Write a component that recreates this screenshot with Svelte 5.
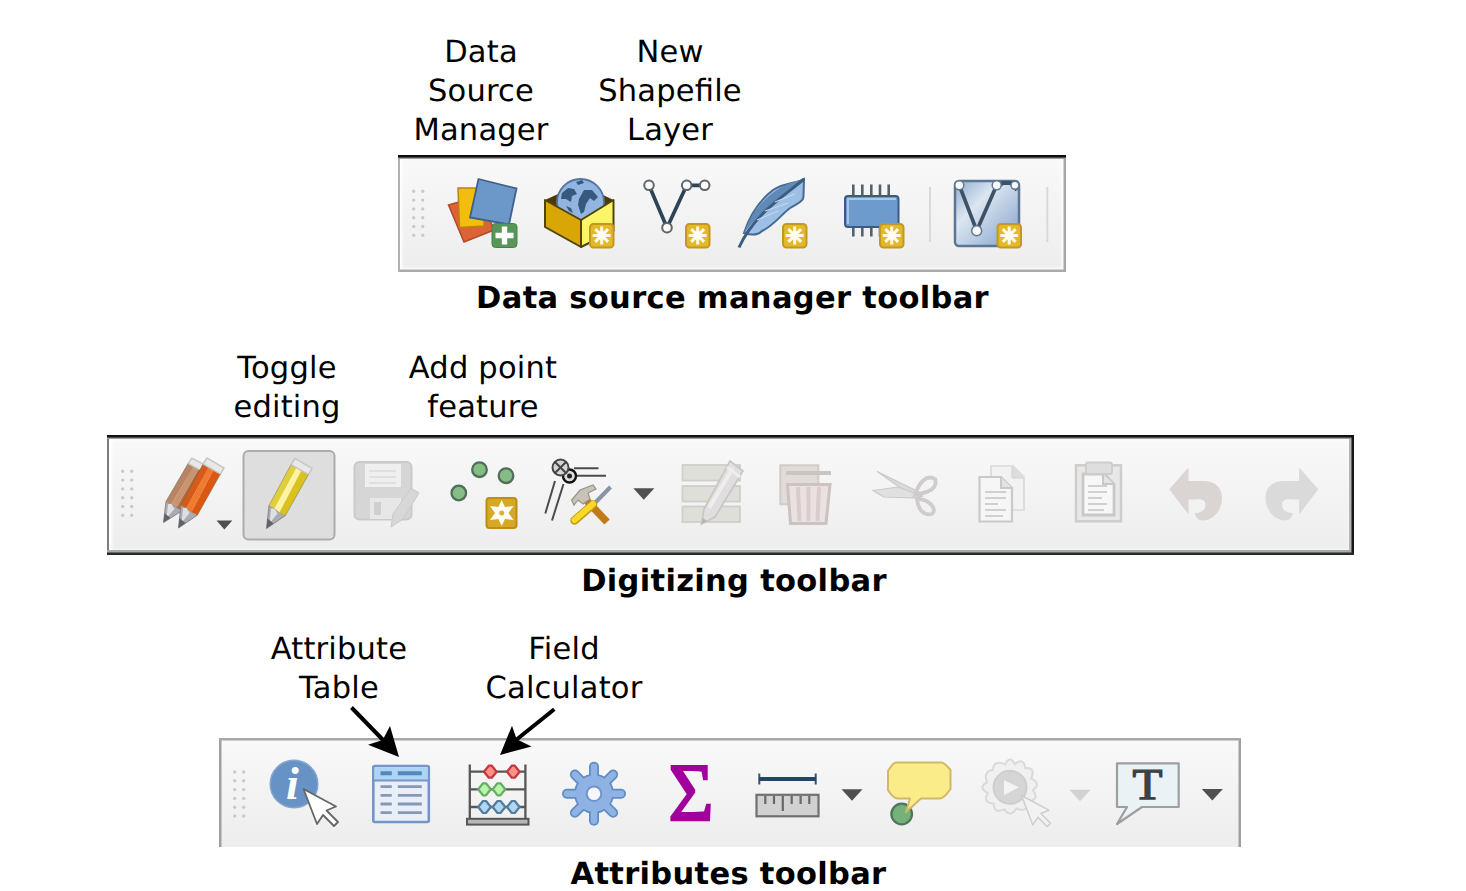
<script>
  const groups = [
    {
      id: 'source', caption: 'Data source manager toolbar', y: 155, height: 117,
      labels: [['Data', 'Source', 'Manager'], ['New', 'Shapefile', 'Layer']],
      stops: [398, 440, 530, 625, 725, 825, 920, 942, 1032, 1066],
      tools: ['grip', 'sources', 'package', 'shapefile', 'feather', 'memory', 'divider', 'virtual', 'divider2']
    },
    {
      id: 'digitizing', caption: 'Digitizing toolbar', y: 435, height: 120,
      labels: [['Toggle', 'editing'], ['Add point', 'feature']],
      stops: [107, 150, 240, 340, 432, 530, 670, 760, 860, 960, 1055, 1150, 1245, 1354],
      tools: ['grip', 'edits', 'toggle', 'save', 'points', 'vertex', 'modify', 'trash', 'cut', 'copy', 'paste', 'undo', 'redo']
    },
    {
      id: 'attributes', caption: 'Attributes toolbar', y: 738, height: 109,
      labels: [['Attribute', 'Table'], ['Field', 'Calculator']],
      stops: [219, 255, 350, 450, 545, 645, 735, 870, 965, 1100, 1241],
      tools: ['grip', 'identify', 'table', 'abacus', 'gear', 'sigma', 'measure', 'tip', 'action', 'text']
    }
  ];
  const six = [0, 1, 2, 3, 4, 5];
  const turns = [0, 45, 90, 135, 180, 225, 270, 315];
</script>

{#snippet star(x, y, s = 25)}
  <g transform="translate({x} {y}) scale({s / 25})">
    <rect x="1" y="1" width="23.5" height="23.5" rx="3.5" fill="#e3b92c" stroke="#c6971f" stroke-width="2" />
    <path d="M12.7 3.5V21.500M3.700 12.5H21.7M6.3 6.1L19.1 18.9M19.1 6.1L6.3 18.9" stroke="#fffbe6" stroke-width="3" />
    <circle cx="12.7" cy="12.5" r="4.2" fill="#fffdf2" />
  </g>
{/snippet}

{#snippet pencil(x, y, left, mid, right, squash = 1)}
  <g transform="translate({x} {y}) scale(1 {squash})">
    <path d="M2.5-23L19-13L0 0Z" fill="#a9abb2" stroke="#888" stroke-width="1" />
    <path d="M4.5-20L8-20L11-15L3-5Z" fill="#dedfe3" />
    <path d="M0 0L1-10L7-5Z" fill="#606268" />
    <path d="M2.5-23L24.5-64L30.5-61L8-20Z" fill={left} />
    <path d="M8-20L30-61L35-58L13-16Z" fill={mid} />
    <path d="M13-16L35-58L42-54L19-13Z" fill={right} />
    <path d="M24.5-64L28.5-70L45.5-60L42-54Z" fill="#e8e8e6" stroke="#c4c4c4" stroke-width="1.4" />
    <path d="M2.5-23L24.5-64M42-54L19-13" stroke="#655b48" stroke-opacity=".4" fill="none" />
  </g>
{/snippet}

{#snippet drop(x, y, fill = '#505050')}
  <path d="M{x - 10.5} {y}H{x + 10.5}L{x} {y + 11.5}Z" {fill} />
{/snippet}

{#snippet pointer(stroke, fill)}
  <path d="M0 0L32.5 17.5L23 21.5L34.5 33L30.5 37L19.5 26L13.5 35Z" {stroke} {fill} stroke-width="1.8" stroke-linejoin="round" />
{/snippet}

{#snippet icon(name, x, y)}
  {#if name === 'grip'}
    {#each six as r}
      <circle cx={x + 15.7} cy={y + (y > 700 ? 34 : 36.3) + r * 8.8} r="1.7" fill="#cacaca" />
      <circle cx={x + 24.7} cy={y + (y > 700 ? 34 : 36.3) + r * 8.8} r="1.7" fill="#cacaca" />
    {/each}
  {:else if name === 'sources'}
    <path d="M448.5 205L464 242L494 230L480 196Z" fill="#dc6335" stroke="#b04a28" stroke-width="1.5" />
    <path d="M458 188H484V226L459.5 227.5Z" fill="#f2bd0c" stroke="#b98213" stroke-width="1.5" />
    <path d="M478.5 179L516.5 188.5L509 224.5L470 217.5Z" fill="#6c98c9" stroke="#40608c" stroke-width="1.8" />
    <rect x="492" y="223.500" width="25" height="24" rx="3.5" fill="#579657" stroke="#448448" />
    <path d="M504.500 226.500V244.500M495.500 235.500H513.500" stroke="#fff" stroke-width="5.400" />
  {:else if name === 'package'}
    <path d="M545 200L580 184L613.500 200L581 219Z" fill="#4b3a08" />
    <circle cx="580.500" cy="202.500" r="23.500" fill="#91b4e0" stroke="#54759f" stroke-width="1.800" />
    <path d="M562 193L568 188L574 189L577 194L572 196L571 202L566 199L561 199ZM579 199L584 190L592 190L598 197L594 201L590 198L586 204L584 212L581 214L578 205ZM576 182L582 180L584 183L578 185ZM566 206L571 208L573 213L569 211Z" fill="#36597d" />
    <path d="M545 200L581 220V247L545 227Z" fill="#d8a606" stroke="#51430b" stroke-width="2" stroke-linejoin="round" />
    <path d="M581 220L613.500 200V231L581 247Z" fill="#fcf568" stroke="#51430b" stroke-width="2" stroke-linejoin="round" />
    {@render star(589, 223)}
  {:else if name === 'shapefile'}
    <path d="M649 185.300L667 227.700L686.700 185.300H704.700" fill="none" stroke="#2d4358" stroke-width="3.700" />
    <g fill="#fafafa" stroke="#5e6469" stroke-width="2">
      <circle cx="649" cy="185.300" r="4.800" /><circle cx="667" cy="227.700" r="4.800" />
      <circle cx="686.700" cy="185.300" r="4.800" /><circle cx="704.700" cy="185.300" r="4.800" />
    </g>
    {@render star(685, 223)}
  {:else if name === 'feather'}
    <path d="M804 179C795 184 785 182 773 190C760 200 750 214 744 233C750 235 757 236 762 231C773 226 781 215 790 208C797 204 804 201 803.500 196Z" fill="#9dbee5" stroke="#466b92" stroke-width="2" />
    <path d="M804 179C784 183 757 197 744 233C763 208 782 198 804 179Z" fill="#6089b6" />
    <path d="M804 179C783 197 754 214 739 247.500" fill="none" stroke="#3c5d80" stroke-width="3" />
    <path d="M757 220L778 211M765 211L788 203M775 202L795 194" stroke="#c5d8f0" stroke-width="1.200" />
    {@render star(782, 223)}
  {:else if name === 'memory'}
    <path d="M853.300 184.500V236.500M862.300 184.500V236.500M871.300 184.500V236.500M880 184.500V236.500M888.700 184.500V236.500" stroke="#53606e" stroke-width="2.600" />
    <rect x="845" y="196" width="53.500" height="31" rx="3" fill="#6e9bce" stroke="#3c5a82" stroke-width="2" />
    <path d="M848 224V199H896" fill="none" stroke="#a9c8ea" stroke-width="1.800" />
    {@render star(879, 223)}
  {:else if name === 'divider'}
    <path d="M930 187V242" stroke="#d9d9d9" stroke-width="2" />
  {:else if name === 'divider2'}
    <path d="M1047.300 187V242" stroke="#d9d9d9" stroke-width="2" />
  {:else if name === 'virtual'}
    <rect x="955" y="181" width="64" height="65" rx="4" fill="url(#glass)" stroke="#5b7595" stroke-width="2.500" />
    <path d="M959.300 185.300L976.700 230.700L996.700 185.300" fill="none" stroke="#3d5167" stroke-width="3.700" />
    <path d="M996.700 187L1003 183H1011L1017 190" fill="none" stroke="#3d5167" stroke-width="4" />
    <g fill="#f7f9fb" stroke="#64778c" stroke-width="1.500">
      <circle cx="959.300" cy="185.300" r="4.500" /><circle cx="976.700" cy="230.700" r="5" />
      <circle cx="996.700" cy="185.300" r="4.500" /><circle cx="1015" cy="185.300" r="4" />
    </g>
    {@render star(996.500, 223)}
  {:else if name === 'edits'}
    {@render pencil(163.500, 522.500, '#b98463', '#ca9470', '#ad6d49', 0.92)}
    {@render pencil(178.500, 528, '#d75b18', '#f07a30', '#dc5710')}
    <path d="M216.500 520.500H232.300L224.400 529.500Z" fill="#505050" />
  {:else if name === 'toggle'}
    <rect x="243.500" y="451" width="91" height="88.500" rx="5" fill="#dedede" stroke="#acacac" stroke-width="2" />
    {@render pencil(266.500, 528.500, '#e0cf3c', '#fdf3a0', '#d9c21d')}
  {:else if name === 'save'}
    <rect x="354.500" y="462" width="57" height="57.500" rx="5" fill="#d6d6d6" stroke="#cacaca" stroke-width="2" />
    <path d="M365 464H401V487H365Z" fill="#efefef" /><path d="M369 471H396M369 477H396M369 483H396" stroke="#dadada" stroke-width="1.500" />
    <rect x="370" y="498" width="31" height="21" fill="#e7e7e7" /><rect x="374" y="502" width="7" height="13" fill="#cfcfcf" />
    <path d="M411 488L419 493L403 519L391 527L393 514Z" fill="#d8d7d7" stroke="#cacaca" />
  {:else if name === 'points'}
    <g fill="#86bd86" stroke="#506e58" stroke-width="2.300">
      <circle cx="479.500" cy="469.700" r="7.300" /><circle cx="506" cy="475.700" r="7.300" /><circle cx="458.800" cy="493" r="7.300" />
    </g>
    <rect x="486.500" y="498" width="30" height="30" rx="3" fill="#d5a925" stroke="#bd8e17" stroke-width="2" />
    <path d="M501.700 500L505 507L513.500 506L508.500 513L513.500 520L505 519L501.700 526L498.400 519L490 520L495 513L490 506L498.400 507Z" fill="#fffef2" />
    <circle cx="501.700" cy="513" r="2.500" fill="#d3b33c" />
  {:else if name === 'vertex'}
    <path d="M574 468.300H598.500M577 475.700H606M555 481L545.300 513.500M563.500 484L552 520.500" stroke="#4c4c4c" stroke-width="2" />
    <circle cx="569.500" cy="476" r="6.500" fill="#ddd" stroke="#111" stroke-width="2.400" />
    <circle cx="560.500" cy="467.500" r="8" fill="#d5d5d5" stroke="#454545" stroke-width="2" />
    <path d="M555 462L566 473M566 462L555 473" stroke="#444" stroke-width="2" />
    <circle cx="569.500" cy="476" r="2.500" fill="#222" />
    <path d="M587 501L607 522" stroke="#c07b17" stroke-width="7.500" />
    <path d="M571.700 500L580 490L593 485L596 489L588 493L590 499L583 504L578 500L574 505Z" fill="#c9c3b7" stroke="#96938e" stroke-width="1.200" />
    <path d="M591 507L610.500 487" stroke="#8993a3" stroke-width="4" />
    <path d="M574.500 520.500L593 504.500" stroke="#c79718" stroke-width="8.500" stroke-linecap="round" />
    <path d="M574.500 520L593 504" stroke="#f7da28" stroke-width="6" stroke-linecap="round" />
    {@render drop(643.800, 488.300)}
  {:else if name === 'modify'}
    <g fill="#dfdfd9" stroke="#d0cec9" stroke-width="1.800">
      <rect x="682.500" y="465" width="57.500" height="15.500" /><rect x="682.500" y="486" width="57.500" height="15.500" /><rect x="682.500" y="506.500" width="57.500" height="15.500" />
    </g>
    <path d="M730 461L743 471L715 517L701.500 524L704 509Z" fill="#e0dede" stroke="#c9c6c5" stroke-width="1.700" />
    <path d="M709 508L733 468" stroke="#efeeee" stroke-width="4" /><path d="M727 467L740 477" stroke="#ededed" stroke-width="3" />
    <path d="M701.500 524L703 518L707 521Z" fill="#b8b5b4" />
  {:else if name === 'trash'}
    <rect x="780.300" y="465.300" width="38" height="39" fill="#e1dcd8" stroke="#d2cbc7" stroke-width="2" />
    <path d="M786 473H831" stroke="#cbc4c1" stroke-width="4" />
    <path d="M787.500 484.500H830L826 523.500H790.500Z" fill="#eae2e1" stroke="#cbc2c1" stroke-width="3" />
    <path d="M798 487L799.500 521M808.500 487V521M819 487L817.500 521" stroke="#d8cdcc" stroke-width="4" />
  {:else if name === 'cut'}
    <path d="M877 471.500L923 494L918 500Z" fill="#dadada" stroke="#cacaca" stroke-width="1.200" />
    <path d="M873 490.500L898 487L922 496L913 498L884 497Z" fill="#e0e0e0" stroke="#cacaca" stroke-width="1.200" />
    <path d="M915 495C919 482 927 474 935 479C938 489 929 492 915 495ZM917 499C929 499 938 509 932 514C923 516 918 509 917 499Z" fill="none" stroke="#d0cccc" stroke-width="3.800" />
  {:else if name === 'copy'}
    <path d="M991 466H1013L1024 477V510H991Z" fill="#f2f2f2" stroke="#dadada" stroke-width="1.700" /><path d="M1012 466V478H1024" fill="#ddd" stroke="#d2d2d2" />
    <path d="M979.500 477H1001L1012 488V521.500H979.500Z" fill="#f6f6f6" stroke="#c9c9c9" stroke-width="2.200" /><path d="M1001 477V488H1012" fill="#e3e3e3" stroke="#c9c9c9" stroke-width="2" />
    <path d="M985 492H1006M985 498H1006M985 504H998M985 510H1006M985 516H1003" stroke="#d0d0d0" stroke-width="1.800" />
  {:else if name === 'paste'}
    <rect x="1076" y="465.300" width="45" height="56" fill="#e9e8e6" stroke="#cfcdcb" stroke-width="2.500" />
    <path d="M1083 474H1104L1114 484V515H1083Z" fill="#f7f7f7" stroke="#c8c8c8" stroke-width="2.800" />
    <path d="M1103 474V484H1114" fill="#e3e3e3" stroke="#c8c8c8" stroke-width="2" />
    <rect x="1086" y="462.500" width="26" height="11.500" rx="2" fill="#dedede" stroke="#cdcdcd" stroke-width="1.800" />
    <path d="M1088 486H1107M1088 492H1107M1088 498H1102M1088 504H1107M1088 510H1104" stroke="#d0d0d0" stroke-width="1.800" />
  {:else if name === 'undo'}
    <path d="M1169.300 489.300L1188.500 467.500V481H1203C1216 481 1222 488 1222 498C1222 511 1213 520 1203 520.500C1198 520.500 1195 517 1195 513C1203 513 1207 508 1205 502C1203 498 1196 499.500 1188.500 499.500V514.500Z" fill="#dad5d3" />
  {:else if name === 'redo'}
    <path transform="translate(2487.600 0) scale(-1 1)" d="M1169.300 489.300L1188.500 467.500V481H1203C1216 481 1222 488 1222 498C1222 511 1213 520 1203 520.500C1198 520.500 1195 517 1195 513C1203 513 1207 508 1205 502C1203 498 1196 499.500 1188.500 499.500V514.500Z" fill="#dadada" />
  {:else if name === 'identify'}
    <circle cx="294" cy="784" r="23.800" fill="#6792c6" stroke="#83a5cf" stroke-width="1.500" />
    <text x="286" y="799" class="glyph info">i</text>
    <g transform="translate(303.500 789)">{@render pointer('#666', '#fff')}</g>
  {:else if name === 'table'}
    <rect x="373.300" y="766" width="55.500" height="56" rx="1.500" fill="#e9eff8" stroke="#7595c9" stroke-width="2.600" />
    <path d="M374.500 767.500H427.500V780H374.500Z" fill="#add4f6" /><path d="M374 780.500H428" stroke="#7595c9" stroke-width="2" />
    <path d="M380.500 773.300H391.800M397.800 773.300H421.800" stroke="#5588ba" stroke-width="4" />
    <path d="M380.500 786.700H391.800M397.800 786.700H421.800M380.500 795.300H391.800M397.800 795.300H421.800M380.500 804H391.800M397.800 804H421.800M380.500 812.700H391.800M397.800 812.700H421.800" stroke="#8798b7" stroke-width="2.800" />
  {:else if name === 'abacus'}
    <path d="M469.800 764.500V819M525.400 764.500V819M470 771.700H525M470 789.300H525M470 807H525" stroke="#575757" stroke-width="2.300" />
    {#each [[490.300, 771.700, '#ff9188', '#c6363e'], [513.300, 771.700, '#ff9188', '#c6363e'], [484.500, 789.300, '#b9f5a9', '#67ad67'], [499, 789.300, '#b9f5a9', '#67ad67'], [484.500, 807, '#b1d6f2', '#537d9d'], [499, 807, '#b1d6f2', '#537d9d'], [513.300, 807, '#b1d6f2', '#537d9d']] as b}
      <path d="M{b[0] - 6.300} {b[1]}L{b[0] - 1.5} {b[1] - 6}H{b[0] + 1.5}L{b[0] + 6.300} {b[1]}L{b[0] + 1.5} {b[1] + 6}H{b[0] - 1.5}Z" fill={b[2]} stroke={b[3]} stroke-width="2.200" stroke-linejoin="round" />
    {/each}
    <rect x="467" y="818.800" width="61.500" height="5.800" fill="#b7b7b7" stroke="#575757" stroke-width="2" />
  {:else if name === 'gear'}
    <g transform="translate(594 793.700)">
      {#each turns as a}<path transform="rotate({a})" d="M0-17V-27" stroke="#618bc4" stroke-width="10" stroke-linecap="round" />{/each}
      <circle r="20" fill="#618bc4" />
      {#each turns as a}<path transform="rotate({a})" d="M0-14V-27" stroke="#8fb4e4" stroke-width="6.500" stroke-linecap="round" />{/each}
      <circle r="18.300" fill="#8db2e3" /><circle r="7.300" fill="#f5f6f8" stroke="#6e96cc" stroke-width="2" />
    </g>
  {:else if name === 'sigma'}
    <text x="668.500" y="819.700" class="glyph sum" textLength="45" lengthAdjust="spacingAndGlyphs">Σ</text>
  {:else if name === 'measure'}
    <path d="M759.300 773.500V784.500M815.700 773.500V784.500" stroke="#355372" stroke-width="2" /><path d="M759 779H816" stroke="#254568" stroke-width="4" />
    <rect x="756.500" y="794.800" width="62" height="21.500" fill="#d1d1d1" stroke="#707070" stroke-width="2.200" />
    <path d="M765.300 796V804M774 796V804M782.800 796V811M791.700 796V804M800.600 796V804M809.300 796V804" stroke="#686868" stroke-width="2.200" />
    {@render drop(852, 789.300)}
  {:else if name === 'tip'}
    <circle cx="901.700" cy="814" r="10.300" fill="#75b178" stroke="#4f7658" stroke-width="2.300" />
    <path d="M896 762.500H942Q944 762.500 950.500 770V789Q944 798.500 940 798.500H921L906 812L910 798.500H898Q893 798.500 888 790V771Q893 762.500 896 762.500Z" fill="#faec88" stroke="#d2b767" stroke-width="2" stroke-linejoin="round" />
  {:else if name === 'action'}
    <g transform="translate(1010 787.300)">
      <path transform="scale(.96)" d="M-5-24Q0-34 5-24Q14-32 16-20Q27-21 22-9Q33-4 24 3Q31 13 19 15Q18 27 7 22Q0 32-6 23Q-17 28-17 17Q-29 16-23 6Q-34 0-24-5Q-28-17-18-18Q-17-29-5-24Z" fill="#f0f0f0" stroke="#dadada" stroke-width="2.200" />
      <circle r="16.500" fill="#d5d5d5" stroke="#cecece" stroke-width="2" /><path d="M-6-7L9 0L-6 8Z" fill="#f4f4f4" />
    </g>
    <g transform="translate(1021.500 795.500) scale(.84)">{@render pointer('#cecece', '#f2f2f2')}</g>
    {@render drop(1080, 789.800, '#d2d2d2')}
  {:else if name === 'text'}
    <path d="M1117 763.300H1178.700V807H1142L1117 824L1127 807H1117Z" fill="#eaf2f6" stroke="#9b9fa1" stroke-width="2.200" stroke-linejoin="round" />
    <text x="1132.500" y="799" class="glyph letter" textLength="30" lengthAdjust="spacingAndGlyphs">T</text>
    {@render drop(1212.300, 789)}
  {/if}
{/snippet}

<main>
  <svg class="defs" width="0" height="0" aria-hidden="true">
    <linearGradient id="glass" x1="0" y1="0" x2="1" y2="1"><stop offset="0" stop-color="#8eabce" /><stop offset=".35" stop-color="#dce6f1" /><stop offset="1" stop-color="#7fa0c8" /></linearGradient>
  </svg>
  {#each groups as g}
    <section class={g.id}>
      <div class="labels">
        {#each g.labels as lines}
          <div class="label">{#each lines as line}<span>{line}</span>{/each}</div>
        {/each}
      </div>
      <div class="toolbar">
        {#each g.tools as tool, i}
          <svg width={g.stops[i + 1] - g.stops[i]} height={g.height} viewBox="{g.stops[i]} {g.y} {g.stops[i + 1] - g.stops[i]} {g.height}">
            {@render icon(tool, g.stops[i], g.y)}
          </svg>
        {/each}
      </div>
      <h2>{g.caption}</h2>
      {#if g.id === 'attributes'}
        <svg class="arrows" width="210" height="54" viewBox="348 706 210 54">
          <path d="M351.500 707.500L384 741M554.300 709.300L516 740" stroke="#000" stroke-width="4" />
          <path d="M399 757L368 744.800L382.700 740L390 726ZM500 755L512 725.700L516.700 739.300L531.500 746.600Z" />
        </svg>
      {/if}
    </section>
  {/each}
</main>

<style>
  :global(body) { margin: 0; background: #fff; overflow: hidden; }
  main { width: 1466px; height: 891px; overflow: hidden; box-sizing: border-box; padding-top: 33px; color: #000; font: 30.5px/39px "DejaVu Sans", sans-serif; letter-spacing: .2px; font-feature-settings: "liga" 1; text-rendering: geometricPrecision; }
  .defs { display: block; }
  section { display: flex; flex-direction: column; position: relative; }
  .labels { display: flex; }
  .label { width: 180px; display: flex; flex-direction: column; align-items: center; white-space: nowrap; }
  .toolbar { display: flex; background: linear-gradient(#f9f9f9, #ededed); }
  .toolbar svg { display: block; flex: none; }
  h2 { margin: 0; font-size: 30.5px; font-weight: bold; line-height: 39px; text-align: center; letter-spacing: .32px; }

  .source { height: 316px; }
  .source .labels { height: 122px; padding-left: 391px; gap: 9px; }
  .source .toolbar { width: 668px; height: 117px; margin-left: 398px; box-shadow: inset 0 2.500px #0c0c0c, inset 0 4px #999, inset 2px 0 #b0b0b0, inset -2.500px 0 #a6a6a6, inset 0 -2.500px #aaa, inset 0 0 3px 4px #fff; }
  .source h2 { margin-top: 6px; padding-right: 1px; }

  .digitizing { height: 281px; }
  .digitizing .labels { height: 86px; padding-left: 197px; gap: 16px; }
  .digitizing .toolbar { width: 1247px; height: 120px; margin-left: 107px; box-shadow: inset 0 2.500px #111, inset 0 -2.500px #282b2c, inset -2.500px 0 #161616, inset 0 4px #999, inset 0 -5px #aaa, inset 2px 0 #7d7d7d, inset -5px 0 #b5b5b5, inset 0 0 3px 5px #fff; }
  .digitizing h2 { margin-top: 7px; padding-left: 2px; }

  .attributes .labels { height: 108px; padding-left: 249px; gap: 45px; }
  .attributes .toolbar { width: 1022px; height: 109px; margin-left: 219px; box-shadow: inset 0 2.500px #a8a8a8, inset 2.500px 0 #a0a0a0, inset -2.500px 0 #a0a0a0; }
  .attributes h2 { margin-top: 8px; padding-right: 9px; }
  .source h2 { margin-top: 7px; }
  .arrows { position: absolute; left: 348px; top: 76px; }

  .glyph { font-family: "Liberation Serif", serif; letter-spacing: 0; }
  .info { font-size: 46px; font-weight: bold; font-style: italic; fill: #fff; }
  .sum { font-size: 82px; fill: #a0009b; stroke: #a0009b; stroke-width: 2.400px; }
  .letter { font-size: 44px; fill: #3b4247; stroke: #3b4247; stroke-width: 1.300px; }
</style>
